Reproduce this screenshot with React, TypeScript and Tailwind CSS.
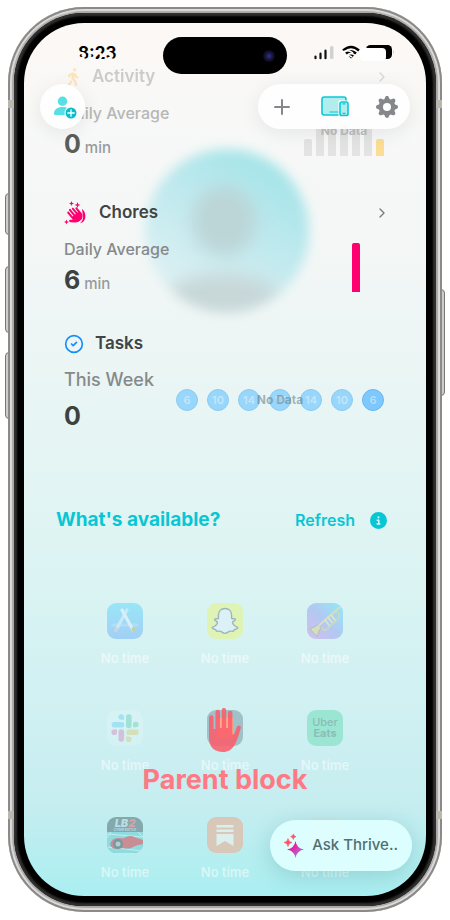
import type { ReactNode } from "react";
import { ChevronRight, CircleCheck, Plus } from "lucide-react";
import { BsGearFill } from "react-icons/bs";
import { FaCircleInfo, FaHand, FaPersonWalking, FaSnapchat } from "react-icons/fa6";

const week = [6, 10, 14, 17, 14, 10, 6];

function StatusBar() {
  return (
    <div className="absolute inset-x-0 top-[18px] z-10 flex items-center justify-between pr-8 pl-[54px]">
      <div className="relative text-[17px] leading-6 font-bold text-black">
        8:23
        <span aria-hidden="true" className="absolute top-1.5 -left-0.5 text-[#fbf9f7]">
          8:23
        </span>
      </div>
      <div className="absolute -top-1 left-1/2 flex h-[37px] w-[124px] -translate-x-1/2 items-center justify-end rounded-full bg-black pr-3">
        <span className="h-3 w-3 rounded-full bg-[radial-gradient(circle,#39308a_0%,#17173f_40%,#08080f_75%)]" />
      </div>
      <svg viewBox="0 0 82 18" className="h-[18px] w-[82px]" aria-hidden="true">
        <path d="M3.500 14.200v-1.700M8.500 14.200v-4.500M13.500 14.200v-7.500" stroke="#111" strokeWidth="2.200" strokeLinecap="round" />
        <rect x="18" y="2" width="3.500" height="13" rx="1.500" fill="#d2d1d0" />
        <path d="M31 6.500q8-7 16 0M34 9.500q5-4.500 10 0" fill="none" stroke="#000" strokeWidth="2.400" />
        <path d="m36 11.500 3 3 3-3q-3-2-6 0" fill="#000" />
        <path d="M28 10q7-6 13-1M32 13q4-3 8 0" fill="none" stroke="#fff" strokeWidth="1.600" />
        <rect x="54" y="1" width="26" height="14" rx="4.500" fill="#000" />
        <path d="M81 6q2 2 0 4" fill="#ccc" />
        <rect x="48" y="4" width="26" height="13" rx="4" fill="#fff" />
      </svg>
    </div>
  );
}

function AddPersonIcon() {
  return (
    <svg viewBox="0 0 24 24" className="h-6 w-6" aria-hidden="true">
      <circle cx="9.500" cy="6.200" r="4.700" fill="#55e0e6" />
      <path d="M1 18.500c0-4 3.500-6.500 8.500-6.500 2 0 4 .5 5.300 1.400L14 20H2.500Q1 20 1 18.500" fill="#55e0e6" />
      <circle cx="18" cy="18" r="6.500" fill="#fff" />
      <circle cx="18" cy="18" r="5.500" fill="#0bbccb" />
      <path d="M18 14.800v6.400M14.800 18h6.400" stroke="#fff" strokeWidth="1.300" strokeLinecap="round" />
    </svg>
  );
}

function DevicesIcon() {
  return (
    <svg viewBox="0 0 28 21" className="h-[21px] w-7" fill="#b2edee" stroke="#0cc7d3" aria-hidden="true">
      <rect x="1" y="1" width="24" height="18" rx="2.200" strokeWidth="1.600" />
      <path d="M9 16h8" strokeWidth="1.200" strokeLinecap="round" />
      <rect x="17.500" y="4.500" width="11" height="17" fill="#fff" stroke="none" />
      <rect x="19" y="6" width="8" height="13.500" rx="1.800" strokeWidth="1.600" />
      <path d="M21.500 7.800h3M21.500 17.300h3" strokeWidth="1.200" />
    </svg>
  );
}

function ClapIcon() {
  return (
    <svg viewBox="0 0 24 24" className="h-6 w-6 text-[#ff0070]" fill="currentColor" aria-hidden="true">
      <path d="M18 8c3.500 2.500 4.300 8 2.500 11-1 1.800-2.600 2.900-4.500 3.300 3-2.500 3.700-6 2.700-8.700z" />
      <g transform="rotate(-40 11 15)">
        <FaHand x={3} y={6} size={16} />
      </g>
      <path d="M7.500 0 8.200 1.800 10 2.500 8.200 3.200 7.500 5 6.800 3.200 5 2.500 6.800 1.800zM13.500 1l.8 2.200 2.200.8-2.200.8-.8 2.200-.8-2.200-2.200-.8 2.200-.8zM2.500 18.500l.7 1.800 1.800.7-1.800.7-.7 1.800-.7-1.800L0 21l1.800-.7z" />
    </svg>
  );
}

function SparkleIcon() {
  return (
    <svg viewBox="0 0 20 24" className="h-6 w-5" aria-hidden="true">
      <defs>
        <linearGradient id="spark" x1="0" y1="0" x2="1" y2="1">
          <stop offset=".3" stopColor="#f5129a" />
          <stop offset=".8" stopColor="#a678dd" />
        </linearGradient>
      </defs>
      <path d="M11.500 7q1 7 8.500 8.500-7.500 1.500-8.500 8.500-1-7-8.500-8.500Q10.500 14 11.500 7" fill="url(#spark)" />
      <path d="M4 4.500Q4.400 8 8 8.500 4.400 9 4 12.500 3.600 9 0 8.500 3.600 8 4 4.500M9.300 0q.3 2.300 2.700 2.700Q9.600 3 9.300 5.400 9 3 6.600 2.700 9 2.300 9.300 0" fill="#ff5068" stroke="#ff5068" strokeWidth=".6" />
    </svg>
  );
}

function Avatar() {
  return (
    <svg viewBox="0 0 200 200" className="pointer-events-none absolute top-[107px] left-1/2 h-[200px] w-[200px] -translate-x-[98px]" aria-hidden="true">
      <defs>
        <linearGradient id="sky" x1=".8" y1="0" x2=".2" y2="1">
          <stop stopColor="#9fe3e7" />
          <stop offset=".45" stopColor="#bfe9ee" />
          <stop offset="1" stopColor="#e4f2f4" />
        </linearGradient>
        <filter id="soft" x="-20%" y="-20%" width="140%" height="140%">
          <feGaussianBlur stdDeviation="6" />
        </filter>
        <filter id="softer" x="-30%" y="-40%" width="160%" height="180%">
          <feGaussianBlur stdDeviation="7" />
        </filter>
        <clipPath id="disc">
          <circle cx="100" cy="101" r="82" />
        </clipPath>
      </defs>
      <g filter="url(#soft)">
        <circle cx="100" cy="101" r="82" fill="url(#sky)" />
        <g clipPath="url(#disc)">
          <ellipse cx="97" cy="91" rx="32" ry="35" fill="#bcd5d7" filter="url(#softer)" />
          <ellipse cx="96" cy="167" rx="56" ry="24" fill="#c8d8d9" filter="url(#softer)" />
        </g>
      </g>
    </svg>
  );
}

function BarChart({ values, color }: { values: number[]; color: string }) {
  return (
    <div className="flex w-20 items-end justify-between pb-1">
      {values.map((value, index) => (
        <span
          key={index}
          className={`w-2 rounded-t-xs ${index === 6 || color === "bg-[#ff0070]" ? color : "bg-[#e2e3e2]"}`}
          style={{ height: value }}
        />
      ))}
    </div>
  );
}

type CardProps = {
  icon: ReactNode;
  title: string;
  label: string;
  value: number;
  unit?: string;
  faded?: boolean;
  chart: ReactNode;
};

function StatCard({ icon, title, label, value, unit, faded, chart }: CardProps) {
  return (
    <section className="relative pr-[42px] pl-10">
      <div className={`flex h-6 items-center justify-between ${faded ? "opacity-25" : ""}`}>
        <h2 className="flex items-center text-[17px] font-semibold text-[#414444]">
          {icon}
          {title}
        </h2>
        {unit && <ChevronRight className="-mr-1.5 h-4 w-4 text-[#777b7b]" strokeWidth={2} />}
      </div>
      <div className="mt-3 flex justify-between">
        <div>
          <p className={`leading-6 font-medium ${unit ? "text-[16px]" : "text-[18px]"} ${faded ? "text-[#b6b7b7]" : "text-[#86898b]"}`}>
            {label}
          </p>
          <p className={`flex h-8 items-baseline gap-1 text-[25px] leading-8 font-bold ${unit ? "mt-[3px]" : "mt-2"} ${faded ? "text-[#5c5c5c]" : "text-[#3d4142]"}`}>
            {value}
            {unit && <span className="text-[15px] font-medium text-[#979a9c]">{unit}</span>}
          </p>
        </div>
        {chart}
      </div>
    </section>
  );
}

function TaskDots() {
  return (
    <div className="relative flex items-center gap-[9px] self-center">
      {week.map((count, index) => (
        <span
          key={index}
          className={`flex h-[22px] w-[22px] items-center justify-center rounded-full border text-[11px] font-semibold ${
            index === 6 ? "border-[#68b6f0] bg-[#7cc8ff] text-[#b5dffb]" : "border-[#8accf3] bg-[#98d6fb] text-[#c3e6fa]"
          }`}
        >
          {count}
        </span>
      ))}
      <span className="absolute inset-0 flex items-center justify-center text-[12px] font-bold text-[#5d6c76]/50">No Data</span>
    </div>
  );
}

function AppTile({ className, children }: { className: string; children?: ReactNode }) {
  return (
    <li className="flex flex-col items-center">
      <div className={`flex h-9 w-9 items-center justify-center overflow-hidden rounded-[9px] ${className}`}>{children}</div>
      <p className="mt-[11px] text-[13px] leading-4 font-semibold text-white/50">No time</p>
    </li>
  );
}

function AppGrid() {
  return (
    <ul className="mt-[67px] grid grid-cols-3 gap-y-11 px-[51px]">
      <AppTile className="bg-linear-to-b from-[#98e6f7] to-[#a2cff5]">
        <svg viewBox="0 0 36 36" fill="none" strokeWidth="3.200" strokeLinecap="round">
          <path d="M6 22h24" stroke="#b2ddf7" />
          <path d="M20 7 9 27" stroke="#c9e9f8" />
          <path d="m15 7 11 20" stroke="#d7eff9" />
          <path d="m9.500 26-.8 1.500" stroke="#d5cfd8" />
          <path d="m26 26 .8 1.500" stroke="#c7ce9c" />
        </svg>
      </AppTile>
      <AppTile className="bg-[#dff4b4]">
        <svg viewBox="0 0 36 36">
          <path
            d="M18 5.500c4.200 0 6.600 3 6.600 6.800v3.200c1.500.8 3.400-.8 3.800.8.300 1.300-2.800 1.700-2.900 3.200 0 1.600 2.500 4 5.200 4.800.5 1.600-2.300 1.900-3.300 2.300-.7.500-.2 1.500-1.300 1.600-1.300.1-2.500-.4-3.800.2-1.400.7-2.200 2-4.300 2s-2.900-1.300-4.300-2c-1.300-.6-2.500-.1-3.800-.2-1.100-.1-.6-1.100-1.300-1.600-1-.4-3.800-.7-3.300-2.300 2.700-.8 5.200-3.200 5.200-4.800-.1-1.500-3.200-1.900-2.900-3.200.4-1.600 2.300 0 3.800-.8v-3.200c0-3.800 2.400-6.800 6.600-6.800z"
            fill="#dcf1f6"
            stroke="#9db5ba"
            strokeWidth="1.400"
          />
        </svg>
      </AppTile>
      <AppTile className="bg-linear-to-tr from-[#d2bfee] via-[#b2c8f2] to-[#8ceaf7]">
        <svg viewBox="0 0 36 36" fill="none" strokeLinecap="round" strokeLinejoin="round">
          <path d="M3 25.500q5-1 8-4l3 3q-3 4-3.500 9-4.500-3-7.500-8" fill="#d4dfc1" stroke="#b3beb4" strokeWidth="1" />
          <path d="M12 22.500 33 4" stroke="#d5dfbf" strokeWidth="2" />
          <path d="M15 25q2 4 5 1l11-10q3-4-1-7" stroke="#ced9bb" strokeWidth="1.600" />
          <path d="m18 17 4 5M21 14.500l4 5M24 12l4 5" stroke="#dce5ca" strokeWidth="1.800" />
        </svg>
      </AppTile>
      <AppTile className="bg-white/15">
        <svg viewBox="0 0 36 36">
          <path d="M19 7a2.800 2.800 0 0 1 5.600 0v8.500a2.800 2.800 0 0 1-5.600 0zM26 14.500a2.800 2.800 0 1 1 2.800 2.800H26z" fill="#a0e2d6" />
          <path d="M17 7a2.800 2.800 0 1 0-2.800 2.800H17zM7.500 12h7a2.800 2.800 0 0 1 0 5.600h-7a2.800 2.800 0 0 1 0-5.600" fill="#a1e3f3" />
          <path d="M22 19.500h7a2.800 2.800 0 0 1 0 5.600h-7a2.800 2.800 0 0 1 0-5.600M19 26.500h2.800a2.800 2.800 0 1 1-2.800 2.800z" fill="#d3e0bc" />
          <path d="M11.500 22a2.800 2.800 0 0 1 5.600 0v7a2.800 2.800 0 0 1-5.600 0zM10 19.500v2.800a2.800 2.800 0 1 1-2.800-2.800z" fill="#d2c1d9" />
        </svg>
      </AppTile>
      <AppTile className="bg-[#9fc1c7]">
        <span className="h-5 w-4 bg-[#ffae8e]" />
      </AppTile>
      <AppTile className="flex-col bg-[#9ae6d2] text-[11px] leading-[11px] font-medium text-[#8bbdb9]">
        <span>Uber</span>
        <span className="font-bold">Eats</span>
      </AppTile>
      <AppTile className="bg-[#83a9ac]">
        <svg viewBox="0 0 36 36">
          <path d="M0 15h36v21H0z" fill="#8edbe0" />
          <path d="M0 17l36 3M0 30l36 4M4 15l-4 6M31 15l5 5" stroke="#c0eeee" strokeWidth="1" />
          <path d="M3 27q2-7 10-6 4 1 6-1 5-2 8 0l9 3v4q-7 1-12 4-4 1-8 0l-6 1q-6 0-7-5" fill="#c88e94" />
          <circle cx="11" cy="27" r="5" fill="#729aa0" />
          <circle cx="11" cy="27" r="2.500" fill="#b7cccf" />
          <text x="18" y="10" fontSize="11" fontWeight="900" fontStyle="italic" textAnchor="middle" fill="#bcdce5">
            LB<tspan fill="#d8a1a6">2</tspan>
          </text>
          <text x="18" y="14" fontSize="3" fontWeight="700" textAnchor="middle" fill="#bcdce5">CYBER BATTLE</text>
        </svg>
      </AppTile>
      <AppTile className="bg-[#d8c8b9]">
        <svg viewBox="0 0 36 36" fill="#dcefed">
          <path d="M9.500 8h17v2.400h-17zM9.500 12.500h17v2.400h-17zM9.500 17h17v12L18 24l-8.500 5z" />
        </svg>
      </AppTile>
      <AppTile className="bg-[#e1dcd8]/30" />
    </ul>
  );
}

function ParentBlock() {
  return (
    <div className="pointer-events-none absolute inset-x-0 bottom-[98px] flex flex-col items-center text-[#ff7985]">
      <svg viewBox="0 0 35 44" className="h-11 w-[35px]" fill="#fb5f6b" opacity=".88" aria-hidden="true">
        <path d="M1 9.500a2.200 2.200 0 0 1 4.500 0V21h2V4a2.200 2.200 0 0 1 4.500 0v16h1.700V2.200a2.200 2.200 0 0 1 4.500 0V20h1.700V5a2.200 2.200 0 0 1 4.500 0v21.500l1.800-.3 2.500-7c1.500-3 4.800-1.700 4 1.100-2 7.500-4 13.700-6.700 17.700C23.500 41.800 20 44 15 44 6.500 44 1 39 1 30z" />
      </svg>
      <p className="mt-2.5 text-[27px] leading-9 font-bold">Parent block</p>
    </div>
  );
}

export default function App() {
  return (
    <main className="min-h-screen bg-white px-2 pt-[7px] font-['Inter',sans-serif]">
      <div className="relative mx-auto w-full max-w-[434px]">
        <span className="absolute top-[186px] -left-[3px] h-[42px] w-2 rounded-l-sm border border-[#777] bg-[#ccc]" />
        <span className="absolute top-[259px] -left-[3px] h-[67px] w-2 rounded-l-sm border border-[#777] bg-[#ccc]" />
        <span className="absolute top-[345px] -left-[3px] h-[67px] w-2 rounded-l-sm border border-[#777] bg-[#ccc]" />
        <span className="absolute top-[282px] -right-[3px] h-[107px] w-2 rounded-r-sm border border-[#777] bg-[#ccc]" />

        <div className="relative rounded-[76px] bg-[#a9a8a7] p-1.5 shadow-[inset_0_0_0_2px_#8b8a88,inset_0_0_1px_4px_#dddcdb]">
          <span className="absolute top-[93px] left-0 h-2 w-1.5 bg-[#b9b8af]" />
          <span className="absolute top-[93px] right-0 h-2 w-1.5 bg-[#b9b8af]" />
          <span className="absolute bottom-[93px] left-0 h-2 w-1.5 bg-[#b9b8af]" />
          <span className="absolute right-0 bottom-[93px] h-2 w-1.5 bg-[#b9b8af]" />
          <div className="rounded-[70px] bg-black p-2.5 shadow-[inset_0_0_2px_3px_#303030]">
            <div className="relative overflow-hidden rounded-[60px] bg-[linear-gradient(180deg,#fdf8f5_0%,#f7f8f7_12%,#f4f7f6_25%,#e7f5f4_45%,#dcf4f3_62%,#cff0f2_80%,#c5edf0_90%,#aaeff1_100%)] pt-[42px] pb-4">
              <StatusBar />
              <Avatar />

              <StatCard
                faded
                icon={<FaPersonWalking className="mr-2.5 text-[#ffb000]" size={18} />}
                title="Activity"
                label="Daily Average"
                value={0}
                unit="min"
                chart={
                  <div className="relative flex items-end">
                    <BarChart values={[17, 28, 38, 46, 38, 28, 17]} color="bg-[#fbdd94]" />
                    <span className="absolute inset-x-0 top-[21px] text-center text-[12px] font-bold text-[#bdbebe]">No Data</span>
                  </div>
                }
              />
              <div className="mt-[41px]">
                <StatCard
                  icon={
                    <span className="mr-[11px]">
                      <ClapIcon />
                    </span>
                  }
                  title="Chores"
                  label="Daily Average"
                  value={6}
                  unit="min"
                  chart={<BarChart values={[0, 0, 0, 0, 49, 0, 0]} color="bg-[#ff0070]" />}
                />
              </div>
              <div className="mt-9">
                <StatCard
                  icon={<CircleCheck className="mr-[11px] h-5 w-5 text-[#168efa]" strokeWidth={2} />}
                  title="Tasks"
                  label="This Week"
                  value={0}
                  chart={<TaskDots />}
                />
              </div>

              <section className="relative mt-[72px]">
                <div className="flex h-8 items-center justify-between pr-[39px] pl-8 text-[#08c7d4]">
                  <h2 className="text-[19px] font-bold">What's available?</h2>
                  <div className="flex items-center gap-[15px]">
                    <button type="button" className="text-[16px] font-semibold">
                      Refresh
                    </button>
                    <button type="button" aria-label="Info">
                      <FaCircleInfo size={17} />
                    </button>
                  </div>
                </div>
                <AppGrid />
              </section>

              <ParentBlock />

              <header className="absolute inset-x-4 top-[61px] flex justify-between">
                <button
                  type="button"
                  aria-label="Add person"
                  className="flex h-[45px] w-[45px] items-center justify-center rounded-full bg-[#fdfefd]/95 pl-1 shadow-[0_4px_20px_rgba(0,0,0,0.08)]"
                >
                  <AddPersonIcon />
                </button>
                <div className="flex h-[45px] w-[152px] items-center justify-between rounded-full bg-[#fdfefd]/95 px-3 text-[#85878b] shadow-[0_4px_20px_rgba(0,0,0,0.08)]">
                  <button type="button" aria-label="Add">
                    <Plus className="h-6 w-6" strokeWidth={2} />
                  </button>
                  <button type="button" aria-label="Devices">
                    <DevicesIcon />
                  </button>
                  <button type="button" aria-label="Settings">
                    <BsGearFill size={22} />
                  </button>
                </div>
              </header>

              <button
                type="button"
                className="absolute right-3.5 bottom-[25px] flex h-[51px] items-center gap-2 rounded-full bg-[#dfffff]/95 px-3.5 text-[15px] font-medium text-[#526e71] shadow-[0_5px_22px_rgba(30,110,115,0.22)]"
              >
                <SparkleIcon />
                Ask Thrive..
              </button>
            </div>
          </div>
        </div>
      </div>
    </main>
  );
}
